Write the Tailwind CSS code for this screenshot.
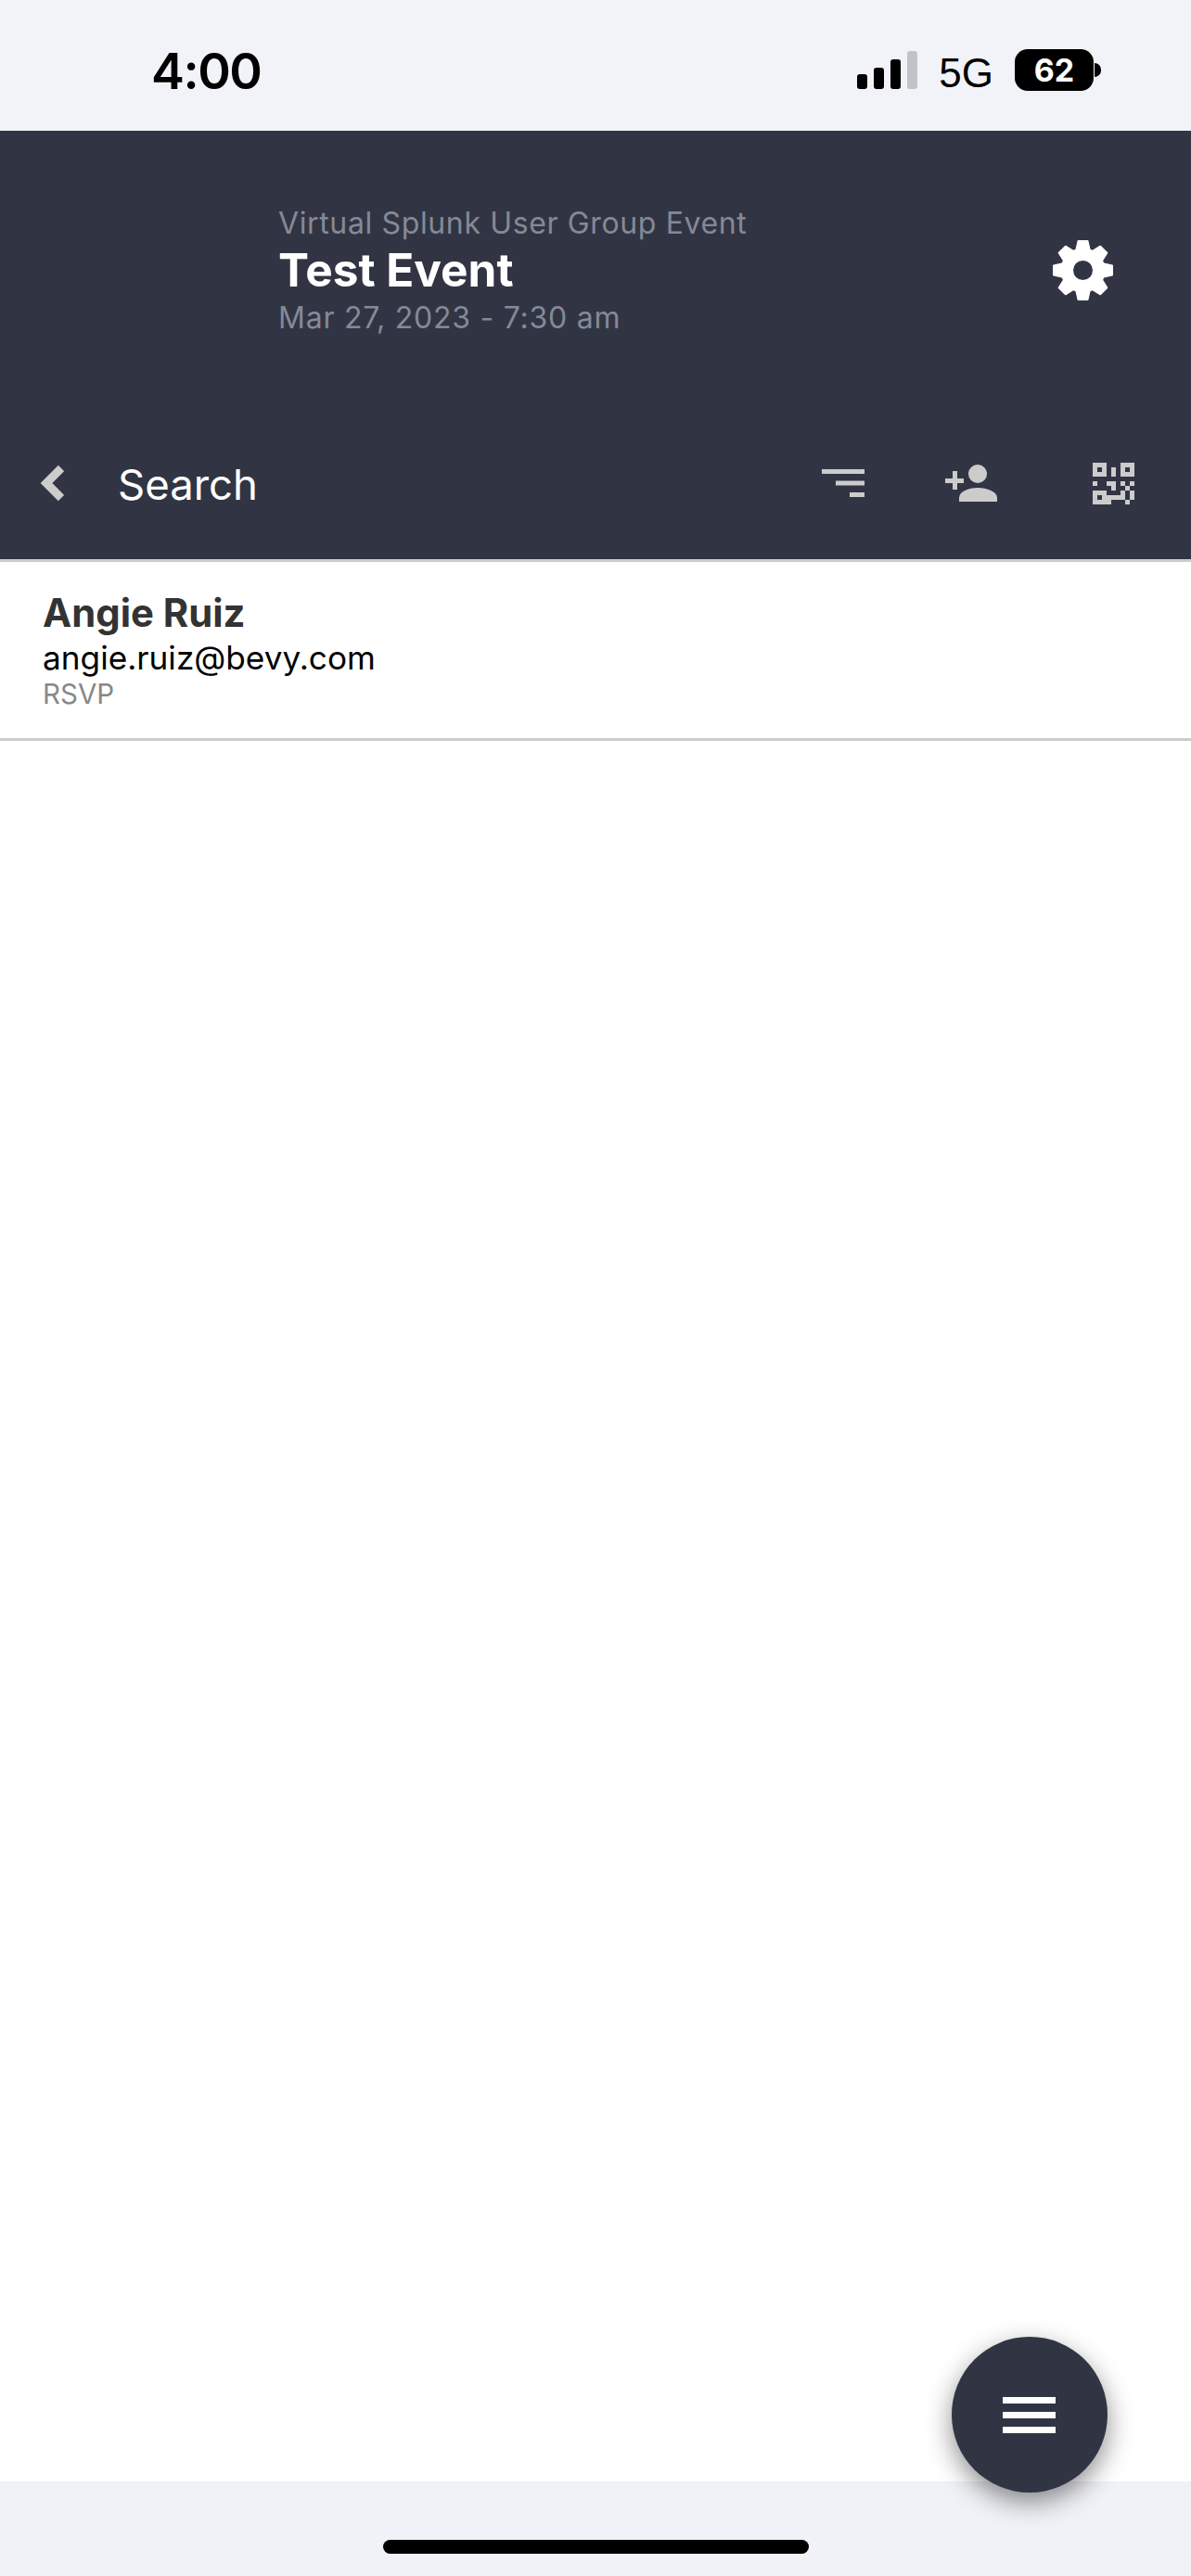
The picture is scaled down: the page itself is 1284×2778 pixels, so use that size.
<!DOCTYPE html>
<html lang="en">
<head>
    <meta charset="UTF-8">
    <meta name="viewport" content="width=device-width, initial-scale=1.0">
    <title>Test Event</title>
    <script src="https://cdn.jsdelivr.net/npm/@tailwindcss/browser@4"></script>
</head>
<body class="font-['Inter',sans-serif]">
    <div class="relative flex flex-col w-[1284px] h-[2778px] bg-white overflow-hidden">
        <!-- status bar -->
        <div class="h-[141px] shrink-0 bg-[#f2f3f8] flex items-start pl-[163px] pr-[97px] pt-[44px]">
            <span class="mt-px text-[54px] leading-[64px] tracking-[-1.5px] font-semibold text-black">4:00</span>
            <div class="ml-auto flex items-end h-[41px] mt-[11px] gap-[7px]">
                <div class="w-[11px] h-[16px] rounded-[3px] bg-black"></div>
                <div class="w-[11px] h-[23px] rounded-[3px] bg-black"></div>
                <div class="w-[11px] h-[32px] rounded-[3px] bg-black"></div>
                <div class="w-[11px] h-[41px] rounded-[3px] bg-[#c2c3c7]"></div>
            </div>
            <span class="ml-[23px] mt-[8px] text-[44px] leading-[54px] text-black font-['Liberation_Sans',sans-serif]">5G</span>
            <div class="ml-[23px] mt-[9px] w-[85px] h-[45px] rounded-[14px] bg-black flex items-center justify-center text-white text-[34px] leading-none font-bold">62</div>
            <div class="ml-px mt-[24px] w-[7px] h-[15px] rounded-r-full bg-black"></div>
        </div>

        <!-- dark header -->
        <div class="h-[462px] shrink-0 bg-[#313543] flex flex-col">
            <div class="h-[320px] shrink-0 flex items-start pl-[300px] pr-[84px] pt-[78px]">
                <div class="flex flex-col">
                    <span class="text-[32px] leading-[44px] tracking-[0.63px] text-[#858997]">Virtual Splunk User Group Event</span>
                    <span class="text-[49.5px] leading-[56px] font-bold text-white">Test Event</span>
                    <span class="mt-[2px] text-[32px] leading-[44px] tracking-[0.75px] text-[#858997]">Mar 27, 2023 - 7:30 am</span>
                </div>
                <svg class="ml-auto mt-[40px] w-[65px] h-[65px]" viewBox="0 0 65 65" fill="#ffffff">
                    <circle cx="32.5" cy="32.5" r="24"/>
                    <g stroke="#ffffff" stroke-width="2" stroke-linejoin="round">
                        <polygon points="27.5,1 37.5,1 40,12 25,12"/>
                        <polygon points="27.5,1 37.5,1 40,12 25,12" transform="rotate(45 32.5 32.5)"/>
                        <polygon points="27.5,1 37.5,1 40,12 25,12" transform="rotate(90 32.5 32.5)"/>
                        <polygon points="27.5,1 37.5,1 40,12 25,12" transform="rotate(135 32.5 32.5)"/>
                        <polygon points="27.5,1 37.5,1 40,12 25,12" transform="rotate(180 32.5 32.5)"/>
                        <polygon points="27.5,1 37.5,1 40,12 25,12" transform="rotate(225 32.5 32.5)"/>
                        <polygon points="27.5,1 37.5,1 40,12 25,12" transform="rotate(270 32.5 32.5)"/>
                        <polygon points="27.5,1 37.5,1 40,12 25,12" transform="rotate(315 32.5 32.5)"/>
                    </g>
                    <circle cx="32.5" cy="32.5" r="10.5" fill="#313543"/>
                </svg>
            </div>
            <div class="flex items-center h-[120px] shrink-0 pl-[43px] pr-[61px]">
                <svg class="w-[26px] h-[40px]" viewBox="0 0 26 40" fill="none" stroke="#cccccc" stroke-width="9"><path d="M23 4 L7 20 L23 36"/></svg>
                <span class="ml-[58px] mt-[3px] text-[45.5px] leading-[60px] text-white">Search</span>
                <svg class="ml-auto w-[46px] h-[30px]" viewBox="0 0 46 30" fill="#cccccc">
                    <rect x="0" y="0" width="46" height="5"/>
                    <rect x="15" y="12.5" width="31" height="5"/>
                    <rect x="30" y="25" width="16" height="5"/>
                </svg>
                <svg class="ml-[87px] w-[56px] h-[40px]" viewBox="0 0 56 40" fill="#cccccc">
                    <circle cx="35" cy="10" r="10"/>
                    <path d="M15 40 V36 C15 29 25 25 35 25 C45 25 56 29 56 36 V40 Z"/>
                    <path d="M8 7 H13 V15 H20 V20 H13 V27 H8 V20 H0 V15 H8 Z"/>
                </svg>
                <svg class="ml-[102px] w-[46px] h-[45px]" viewBox="0 0 9 9" fill="#cccccc" shape-rendering="crispEdges">
                    <path fill-rule="evenodd" d="M0 0H3V3H0ZM1 1V2H2V1Z"/>
                    <path fill-rule="evenodd" d="M6 0H9V3H6ZM7 1V2H8V1Z"/>
                    <path fill-rule="evenodd" d="M0 6H3V9H0ZM1 7V8H2V7Z"/>
                    <rect x="4" y="1" width="1" height="2"/>
                    <rect x="0" y="4" width="1" height="1"/>
                    <path d="M3 4H5V6H4V5H3Z"/>
                    <path d="M6 4H7V5H6ZM8 4H9V5H8ZM7 5H8V6H7ZM6 6H7V7H6ZM8 6H9V8H8ZM7 8H8V9H7Z"/>
                    <path d="M3 7H7V8H4V9H3Z"/>
                </svg>
            </div>
        </div>

        <!-- attendee -->
        <div class="shrink-0 h-[196px] border-t-[3px] border-b-[3px] border-[#cccccc] pl-[46px] pt-[31px] flex flex-col">
            <span class="text-[41.8px] leading-[48px] font-bold text-[#333333]">Angie Ruiz</span>
            <span class="mt-[2px] text-[35.2px] leading-[44px] text-black">angie.ruiz@bevy.com</span>
            <span class="text-[29.5px] leading-[34px] text-[#888888]">RSVP</span>
        </div>

        <div class="flex-1"></div>

        <!-- home indicator -->
        <div class="h-[102px] shrink-0 bg-[#f1f2f7] flex justify-center pt-[63px]">
            <div class="w-[459px] h-[15px] rounded-full bg-black"></div>
        </div>

        <!-- menu button -->
        <div class="absolute left-[1026px] top-[2520px] w-[168px] h-[168px] rounded-full bg-[#313543] shadow-[0_10px_28px_rgba(0,0,0,0.45)] flex flex-col items-center justify-center gap-[9px]">
            <div class="-ml-[2px] w-[57px] h-[7px] bg-white"></div>
            <div class="-ml-[2px] w-[57px] h-[7px] bg-white"></div>
            <div class="-ml-[2px] w-[57px] h-[7px] bg-white"></div>
        </div>
    </div>
</body>
</html>
